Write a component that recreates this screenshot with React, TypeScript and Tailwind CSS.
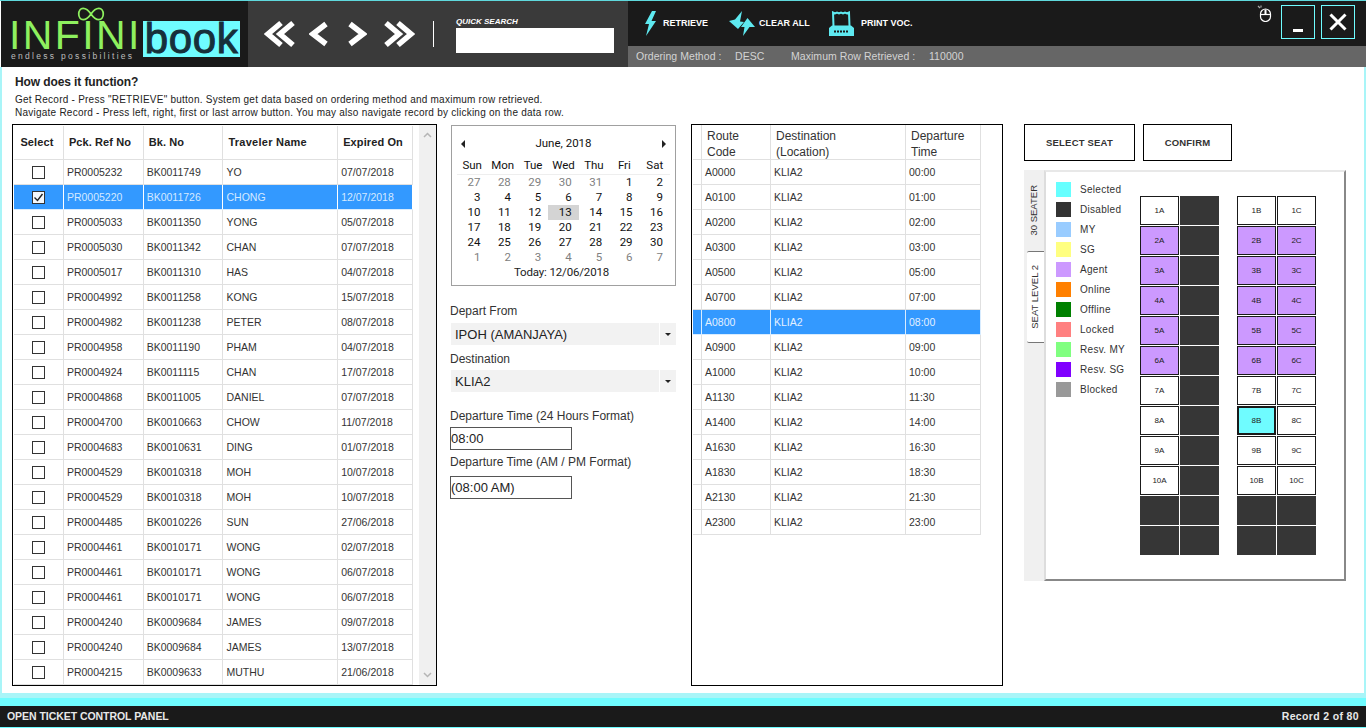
const bookings = [
  ['PR0005232', 'BK0011749', 'YO', '07/07/2018'],
  ['PR0005220', 'BK0011726', 'CHONG', '12/07/2018'],
  ['PR0005033', 'BK0011350', 'YONG', '05/07/2018'],
  ['PR0005030', 'BK0011342', 'CHAN', '07/07/2018'],
  ['PR0005017', 'BK0011310', 'HAS', '04/07/2018'],
  ['PR0004992', 'BK0011258', 'KONG', '15/07/2018'],
  ['PR0004982', 'BK0011238', 'PETER', '08/07/2018'],
  ['PR0004958', 'BK0011190', 'PHAM', '04/07/2018'],
  ['PR0004924', 'BK0011115', 'CHAN', '17/07/2018'],
  ['PR0004868', 'BK0011005', 'DANIEL', '07/07/2018'],
  ['PR0004700', 'BK0010663', 'CHOW', '11/07/2018'],
  ['PR0004683', 'BK0010631', 'DING', '01/07/2018'],
  ['PR0004529', 'BK0010318', 'MOH', '10/07/2018'],
  ['PR0004529', 'BK0010318', 'MOH', '10/07/2018'],
  ['PR0004485', 'BK0010226', 'SUN', '27/06/2018'],
  ['PR0004461', 'BK0010171', 'WONG', '02/07/2018'],
  ['PR0004461', 'BK0010171', 'WONG', '06/07/2018'],
  ['PR0004461', 'BK0010171', 'WONG', '06/07/2018'],
  ['PR0004240', 'BK0009684', 'JAMES', '09/07/2018'],
  ['PR0004240', 'BK0009684', 'JAMES', '13/07/2018'],
  ['PR0004215', 'BK0009633', 'MUTHU', '21/06/2018'],
]

const routes = [
  ['A0000', '00:00'],
  ['A0100', '01:00'],
  ['A0200', '02:00'],
  ['A0300', '03:00'],
  ['A0500', '05:00'],
  ['A0700', '07:00'],
  ['A0800', '08:00'],
  ['A0900', '09:00'],
  ['A1000', '10:00'],
  ['A1130', '11:30'],
  ['A1400', '14:00'],
  ['A1630', '16:30'],
  ['A1830', '18:30'],
  ['A2130', '21:30'],
  ['A2300', '23:00'],
]

const legend = [
  ['Selected', 'bg-[#66ffff]'],
  ['Disabled', 'bg-[#333333]'],
  ['MY', 'bg-[#99ccff]'],
  ['SG', 'bg-[#ffff80]'],
  ['Agent', 'bg-[#cc99ff]'],
  ['Online', 'bg-[#ff8000]'],
  ['Offline', 'bg-[#008000]'],
  ['Locked', 'bg-[#ff8080]'],
  ['Resv. MY', 'bg-[#80ff80]'],
  ['Resv. SG', 'bg-[#8000ff]'],
  ['Blocked', 'bg-[#999999]'],
]

const days = [
  [27, 28, 29, 30, 31, 1, 2],
  [3, 4, 5, 6, 7, 8, 9],
  [10, 11, 12, 13, 14, 15, 16],
  [17, 18, 19, 20, 21, 22, 23],
  [24, 25, 26, 27, 28, 29, 30],
  [1, 2, 3, 4, 5, 6, 7],
]

function Seat({ label }: { label?: string }) {
  if (!label) return <div className="h-[29px] w-[39px] bg-[#363636]" />
  const row = parseInt(label)
  let color = 'bg-white'
  if (row >= 2 && row <= 6) color = 'bg-[#cc99ff]'
  if (label === '8B') color = 'bg-[#6ffcff] border-2'
  return (
    <div className={`flex h-[29px] w-[39px] items-center justify-center border border-[#1a1a1a] text-[8px] text-[#222] ${color}`}>
      {label}
    </div>
  )
}

function Check({ checked }: { checked: boolean }) {
  return (
    <span className={`flex h-[13px] w-[13px] items-center justify-center border border-[#333] ${checked ? 'bg-[#f4f8fc]' : 'bg-white'}`}>
      {checked && (
        <svg width="11" height="11" viewBox="0 0 11 11" fill="none" stroke="#222" strokeWidth="1.4">
          <path d="M1.5 5.5 4.5 8.5 9.5 2" />
        </svg>
      )}
    </span>
  )
}

function Logo() {
  return (
    <div className="flex h-full w-[247px] shrink-0 items-start bg-[#1a1a1a] pl-[8px] pt-[17px]">
      <div className="relative w-[133px] shrink-0">
        <svg className="absolute left-[68px] top-[-11px]" width="28" height="14" viewBox="0 0 30 16" fill="none" stroke="#8ef05f" strokeWidth="2">
          <path d="M15 8C11 2 8 1.5 6 1.5 3 1.5 1 4.5 1 8s2 6.5 5 6.5c2 0 5-.5 9-6.5 4-6 7-6.5 9-6.5 3 0 5 3 5 6.5s-2 6.5-5 6.5c-2 0-5-.5-9-6.500Z" />
        </svg>
        <div className="whitespace-nowrap text-[41px] leading-[34px] tracking-[2.4px] text-[#8ef05f]">INFINI</div>
        <div className="whitespace-nowrap pl-[2px] text-[8.5px] leading-[8px] tracking-[2.3px] text-[#bdbdbd]">endless possibilities</div>
      </div>
      <div className="ml-[1px] mt-[3px] flex h-[36px] w-[97px] items-center justify-center bg-[#6ffcff] text-[42px] leading-[36px] tracking-[0.6px] text-[#16303a] [-webkit-text-stroke:1px_#16303a]">
        book
      </div>
    </div>
  )
}

function NavArrows() {
  const props = { fill: 'none', stroke: 'white', strokeWidth: 5.5 }
  return (
    <div className="flex h-full w-[380px] shrink-0 items-center bg-[#3a3a3a] pl-[16px]">
      <svg width="32" height="28" viewBox="0 0 32 28" {...props}>
        <path d="M17 3 4 14l13 11M29 3 16 14l13 11" />
      </svg>
      <svg className="ml-[13px]" width="20" height="28" viewBox="0 0 20 28" {...props}>
        <path d="M17 4 4 14l13 10" />
      </svg>
      <svg className="ml-[18px]" width="20" height="28" viewBox="0 0 20 28" {...props}>
        <path d="M3 4l13 10L3 24" />
      </svg>
      <svg className="ml-[16px]" width="32" height="28" viewBox="0 0 32 28" {...props}>
        <path d="M3 3l13 11L3 25M15 3l13 11-13 11" />
      </svg>
      <div className="ml-[18px] h-[26px] w-px bg-white" />
      <div className="ml-[22px] flex flex-col pt-[1px]">
        <span className="text-[8px] font-bold italic leading-[11px] text-white">QUICK SEARCH</span>
        <div className="mt-[1px] h-[25px] w-[158px] bg-white" />
      </div>
    </div>
  )
}

function Toolbar() {
  return (
    <div className="flex h-full flex-1 flex-col">
      <div className="flex h-[45px] items-center bg-[#1a1a1a] text-[9px] font-bold text-white">
        <svg className="ml-[16px]" width="13" height="25" viewBox="0 0 13 25" fill="#5ee9f0">
          <path d="M8 0 1 13h4L2 25l10-15H7.500L12 0Z" />
        </svg>
        <span className="ml-[6px] w-[66px]">RETRIEVE</span>
        <svg width="26" height="25" viewBox="0 0 26 25" fill="#5ee9f0">
          <path d="M13 0 6 8.500 0 10l9 8 6-7-4-.5Z" />
          <path d="M18.500 7 12 16h3.500L14 25l6.500-9H26Z" />
        </svg>
        <span className="ml-[4px] w-[70px]">CLEAR ALL</span>
        <svg width="25" height="25" viewBox="0 0 25 25">
          <path d="M4.500 15 4 1.500l2 1 2-1 2 1 2-1 2 1 2-1 2 1 2-1L20.500 15" fill="none" stroke="#5ee9f0" strokeWidth="2" />
          <path d="M0 17l3-2.500h19l3 2.500v8H0Z" fill="#5ee9f0" />
          <path d="M5 20.500h15" stroke="#1a1a1a" strokeWidth="2" strokeDasharray="2 1" />
        </svg>
        <span className="ml-[7px]">PRINT VOC.</span>
        <div className="ml-auto mt-[-4px] flex items-start pr-[11px]">
          <svg className="mr-[9px]" width="15" height="17" viewBox="0 0 15 17" fill="none" stroke="white" strokeWidth="1.2">
            <rect x="3.5" y="4" width="10" height="12.5" rx="5" />
            <path d="M3.500 9.500h10" />
            <path d="M8.500 4.500v5" strokeWidth="2" />
            <path d="M1 1l2 2M4 .5v2" stroke="#aaa" />
          </svg>
          <div className="flex h-[34px] w-[34px] items-end justify-center border border-[#6ffcff] pb-[6px]">
            <div className="h-[3px] w-[10px] bg-white" />
          </div>
          <div className="ml-[6px] flex h-[34px] w-[34px] items-center justify-center border border-[#6ffcff]">
            <svg width="18" height="18" viewBox="0 0 18 18" stroke="white" strokeWidth="3">
              <path d="M1.500 1.500l15 15M16.500 1.500l-15 15" />
            </svg>
          </div>
        </div>
      </div>
      <div className="flex flex-1 items-center bg-[#666] pl-[8px] text-[10.5px] tracking-[0.05px] text-[#d4d4d4]">
        <span className="w-[99px]">Ordering Method :</span>
        <span className="w-[56px]">DESC</span>
        <span className="w-[138px]">Maximum Row Retrieved :</span>
        <span>110000</span>
      </div>
    </div>
  )
}

function BookingTable() {
  return (
    <div className="flex h-[562px] w-[425px] shrink-0 border border-black bg-white">
      <div className="w-[400px] pl-px">
        <div className="flex h-[35px] pt-px text-[11px] font-bold tracking-[0.1px] text-[#222]">
          <div className="flex w-[50px] items-center justify-center border-b border-r border-[#e0e0e0] pr-[3px]">Select</div>
          <div className="flex w-[80px] items-center border-b border-r border-[#e0e0e0] pl-[5px]">Pck. Ref No</div>
          <div className="flex w-[80px] items-center border-b border-r border-[#e0e0e0] pl-[5px]">Bk. No</div>
          <div className="flex w-[115px] items-center border-b border-r border-[#e0e0e0] pl-[5px] tracking-[0.25px]">Traveler Name</div>
          <div className="flex w-[75px] items-center border-b border-r border-[#e0e0e0] pl-[5px]">Expired On</div>
        </div>
        {bookings.map((b, i) => {
          const sel = i === 1
          const cell = `flex items-center border-r pl-[3px] pt-px ${sel ? 'border-white' : 'border-[#e0e0e0]'}`
          return (
            <div
              key={i}
              className={`flex h-[25px] border-b text-[10.5px] ${sel ? 'border-[#d8ecff] bg-[#3399ff] text-[#d5e9ff]' : 'border-[#e0e0e0] text-[#333]'}`}
            >
              <div className={`${cell} w-[50px] justify-center pl-0 pr-[2px]`}>
                <Check checked={sel} />
              </div>
              <div className={`${cell} w-[80px] overflow-hidden`}>{b[0]}</div>
              <div className={`${cell} w-[80px]`}>{b[1]}</div>
              <div className={`${cell} w-[115px]`}>{b[2]}</div>
              <div className={`${cell} w-[75px]`}>{b[3]}</div>
            </div>
          )
        })}
      </div>
      <div className="ml-auto flex w-[17px] flex-col items-center justify-between bg-[#f0f0f0] py-[7px]">
        <svg width="9" height="6" viewBox="0 0 9 6" fill="none" stroke="#b5b5b5" strokeWidth="1.5"><path d="M1 5l3.500-3.500L8 5" /></svg>
        <svg width="9" height="6" viewBox="0 0 9 6" fill="none" stroke="#b5b5b5" strokeWidth="1.5"><path d="M1 1l3.500 3.500L8 1" /></svg>
      </div>
    </div>
  )
}

function Calendar() {
  return (
    <div className="ml-[1px] h-[161px] w-[225px] border border-[#a0a0a0] bg-white font-['Roboto',sans-serif] text-[11.5px] leading-[15px] text-[#111]">
      <div className="flex h-[32px] items-center justify-between px-[9px] pt-[3px]">
        <span className="h-0 w-0 border-y-[4px] border-r-[4px] border-y-transparent border-r-[#222]" />
        <span>June, 2018</span>
        <span className="h-0 w-0 border-y-[4px] border-l-[4px] border-y-transparent border-l-[#222]" />
      </div>
      <div className="mx-[5px] grid grid-cols-7 border-b border-[#eee] pb-[1px] text-center">
        {['Sun', 'Mon', 'Tue', 'Wed', 'Thu', 'Fri', 'Sat'].map((d) => (
          <span key={d}>{d}</span>
        ))}
      </div>
      <div className="mx-[5px] grid grid-cols-7">
        {days.map((week, w) =>
          week.map((d, i) => {
            const muted = (w === 0 && d > 20) || w === 5
            return (
              <span
                key={`${w}-${i}`}
                className={`pr-[7px] text-right ${muted ? 'text-[#808080]' : ''} ${w === 2 && i === 3 ? 'bg-[#d4d4d4]' : ''}`}
              >
                {d}
              </span>
            )
          }),
        )}
      </div>
      <div className="pr-[4px] text-center tracking-[-0.15px] text-[#222]">Today: 12/06/2018</div>
    </div>
  )
}

function Dropdown({ label, className }: { label: string; className?: string }) {
  return (
    <div className={`ml-[1px] flex h-[22px] w-[225px] text-[13px] text-[#222] ${className ?? ''}`}>
      <div className="flex flex-1 items-center bg-[#f2f2f2] pl-[4px] pt-px">{label}</div>
      <div className="ml-px flex w-[16px] items-center justify-center bg-[#f2f2f2]">
        <span className="h-0 w-0 border-x-[3px] border-t-[3px] border-x-transparent border-t-[#222]" />
      </div>
    </div>
  )
}

function FormColumn() {
  return (
    <div className="ml-[13px] mt-px flex w-[228px] shrink-0 flex-col text-[12px] text-[#333]">
      <Calendar />
      <div className="mt-[18px] leading-[14px]">Depart From</div>
      <Dropdown label="IPOH (AMANJAYA)" className="mt-[5px]" />
      <div className="mt-[7px] leading-[14px]">Destination</div>
      <Dropdown label="KLIA2" className="mt-[4px]" />
      <div className="mt-[17px] leading-[14px]">Departure Time (24 Hours Format)</div>
      <div className="mt-[4px] flex h-[23px] w-[122px] items-center border border-[#555] text-[13px] text-[#222]">08:00</div>
      <div className="mt-[5px] leading-[14px]">Departure Time (AM / PM Format)</div>
      <div className="mt-[7px] flex h-[23px] w-[122px] items-center border border-[#555] text-[13px] text-[#222]">(08:00 AM)</div>
    </div>
  )
}

function RouteTable() {
  const line = 'border-r border-b border-[#e0e0e0]'
  return (
    <div className="ml-[13px] h-[562px] w-[312px] shrink-0 border border-black bg-white">
      <div className="flex h-[35px] text-[12px] leading-[16px] text-[#333]">
        <div className={`${line} ml-px w-[9px]`} />
        <div className={`${line} w-[69px] pl-[5px] pt-[3px]`}>Route<br />Code</div>
        <div className={`${line} w-[135px] pl-[5px] pt-[3px]`}>Destination<br />(Location)</div>
        <div className={`${line} w-[75px] pl-[5px] pt-[3px]`}>Departure<br />Time</div>
      </div>
      {routes.map((r) => {
        const sel = r[0] === 'A0800'
        const cell = `flex items-center border-r border-b pl-[3px] pt-px ${sel ? 'border-[#d8ecff]' : 'border-[#e0e0e0]'}`
        return (
          <div key={r[0]} className={`ml-px flex h-[25px] w-[288px] text-[10.5px] ${sel ? 'bg-[#3399ff] text-[#e2f0ff]' : 'text-[#333]'}`}>
            <div className={`${cell} w-[9px]`} />
            <div className={`${cell} w-[69px]`}>{r[0]}</div>
            <div className={`${cell} w-[135px]`}>KLIA2</div>
            <div className={`${cell} w-[75px]`}>{r[1]}</div>
          </div>
        )
      })}
    </div>
  )
}

function SeatPanel() {
  const rows = Array.from({ length: 10 }, (_, i) => i + 1)
  return (
    <div className="ml-[21px] w-[322px] shrink-0">
      <div className="flex gap-[8px] text-[9.5px] font-bold tracking-[0.2px] text-[#333]">
        <div className="flex h-[37px] w-[111px] items-center justify-center border border-black pt-px">SELECT SEAT</div>
        <div className="flex h-[37px] w-[89px] items-center justify-center border border-black pt-px">CONFIRM</div>
      </div>
      <div className="mt-[9px] flex h-[411px] bg-[#f0f0f0]">
        <div className="w-[20px] shrink-0 text-[9.5px] text-[#333]">
          <div className="flex h-[81px] items-center justify-center">
            <span className="rotate-180 [writing-mode:vertical-rl]">30 SEATER</span>
          </div>
          <div className="ml-[3px] flex h-[92px] items-center justify-center rounded-l-[2px] border-y border-[#777] bg-white">
            <span className="rotate-180 [writing-mode:vertical-rl]">SEAT LEVEL 2</span>
          </div>
        </div>
        <div className="flex flex-1 border-2 border-b-[#888] border-l-[#ddd] border-r-[#888] border-t-[#e8e8e8] bg-white pl-[10px] pt-[7px]">
          <div className="flex w-[84px] shrink-0 flex-col text-[10px] tracking-[0.3px] text-[#333]">
            {legend.map(([name, color]) => (
              <div key={name} className="flex h-[20px] items-center">
                <span className={`h-[15px] w-[15px] ${color}`} />
                <span className="ml-[9px]">{name}</span>
              </div>
            ))}
          </div>
          <div className="mt-[17px] flex gap-[18px]">
            <div className="grid grid-cols-[39px_39px] gap-x-[1px] gap-y-px self-start">
              {rows.flatMap((n) => [<Seat key={`${n}A`} label={`${n}A`} />, <Seat key={`${n}X`} />])}
              <Seat /><Seat /><Seat /><Seat />
            </div>
            <div className="grid grid-cols-[39px_39px] gap-x-[1px] gap-y-px self-start">
              {rows.flatMap((n) => [<Seat key={`${n}B`} label={`${n}B`} />, <Seat key={`${n}C`} label={`${n}C`} />])}
              <Seat /><Seat /><Seat /><Seat />
            </div>
          </div>
        </div>
      </div>
    </div>
  )
}

export default function App() {
  return (
    <div className="flex h-[728px] w-[1366px] flex-col overflow-hidden bg-white font-['Liberation_Sans',Arial,sans-serif]">
      <header className="flex h-[67px] shrink-0 border-t border-[#5fd8dc] pl-px">
        <Logo />
        <NavArrows />
        <Toolbar />
      </header>

      <main className="flex min-h-0 flex-1 flex-col border-x-2 border-[#a9f5f8]">
        <div className="h-[57px] shrink-0 pl-[13px] pt-[8px] text-[#222]">
          <h1 className="text-[12px] font-bold leading-[14px] tracking-[-0.1px]">How does it function?</h1>
          <p className="mt-[4px] text-[10px] leading-[13px] tracking-[0.24px]">
            Get Record - Press "RETRIEVE" button. System get data based on ordering method and maximum row retrieved.
            <br />
            Navigate Record - Press left, right, first or last arrow button. You may also navigate record by clicking on the data row.
          </p>
        </div>
        <div className="flex pl-[10px]">
          <BookingTable />
          <FormColumn />
          <RouteTable />
          <SeatPanel />
        </div>
      </main>

      <div className="h-[5px] shrink-0 bg-[#a9f5f8]" />
      <div className="h-[8px] shrink-0 bg-[#6ffcff]" />
      <footer className="flex h-[21px] shrink-0 items-center justify-between bg-[#1a1a1a] px-[7px] text-[10.5px] font-bold text-[#e8e8e8]">
        <span className="tracking-[-0.05px]">OPEN TICKET CONTROL PANEL</span>
        <span className="tracking-[0.35px]">Record 2 of 80</span>
      </footer>
      <div className="h-px shrink-0 bg-[#6ffcff]" />
    </div>
  )
}
